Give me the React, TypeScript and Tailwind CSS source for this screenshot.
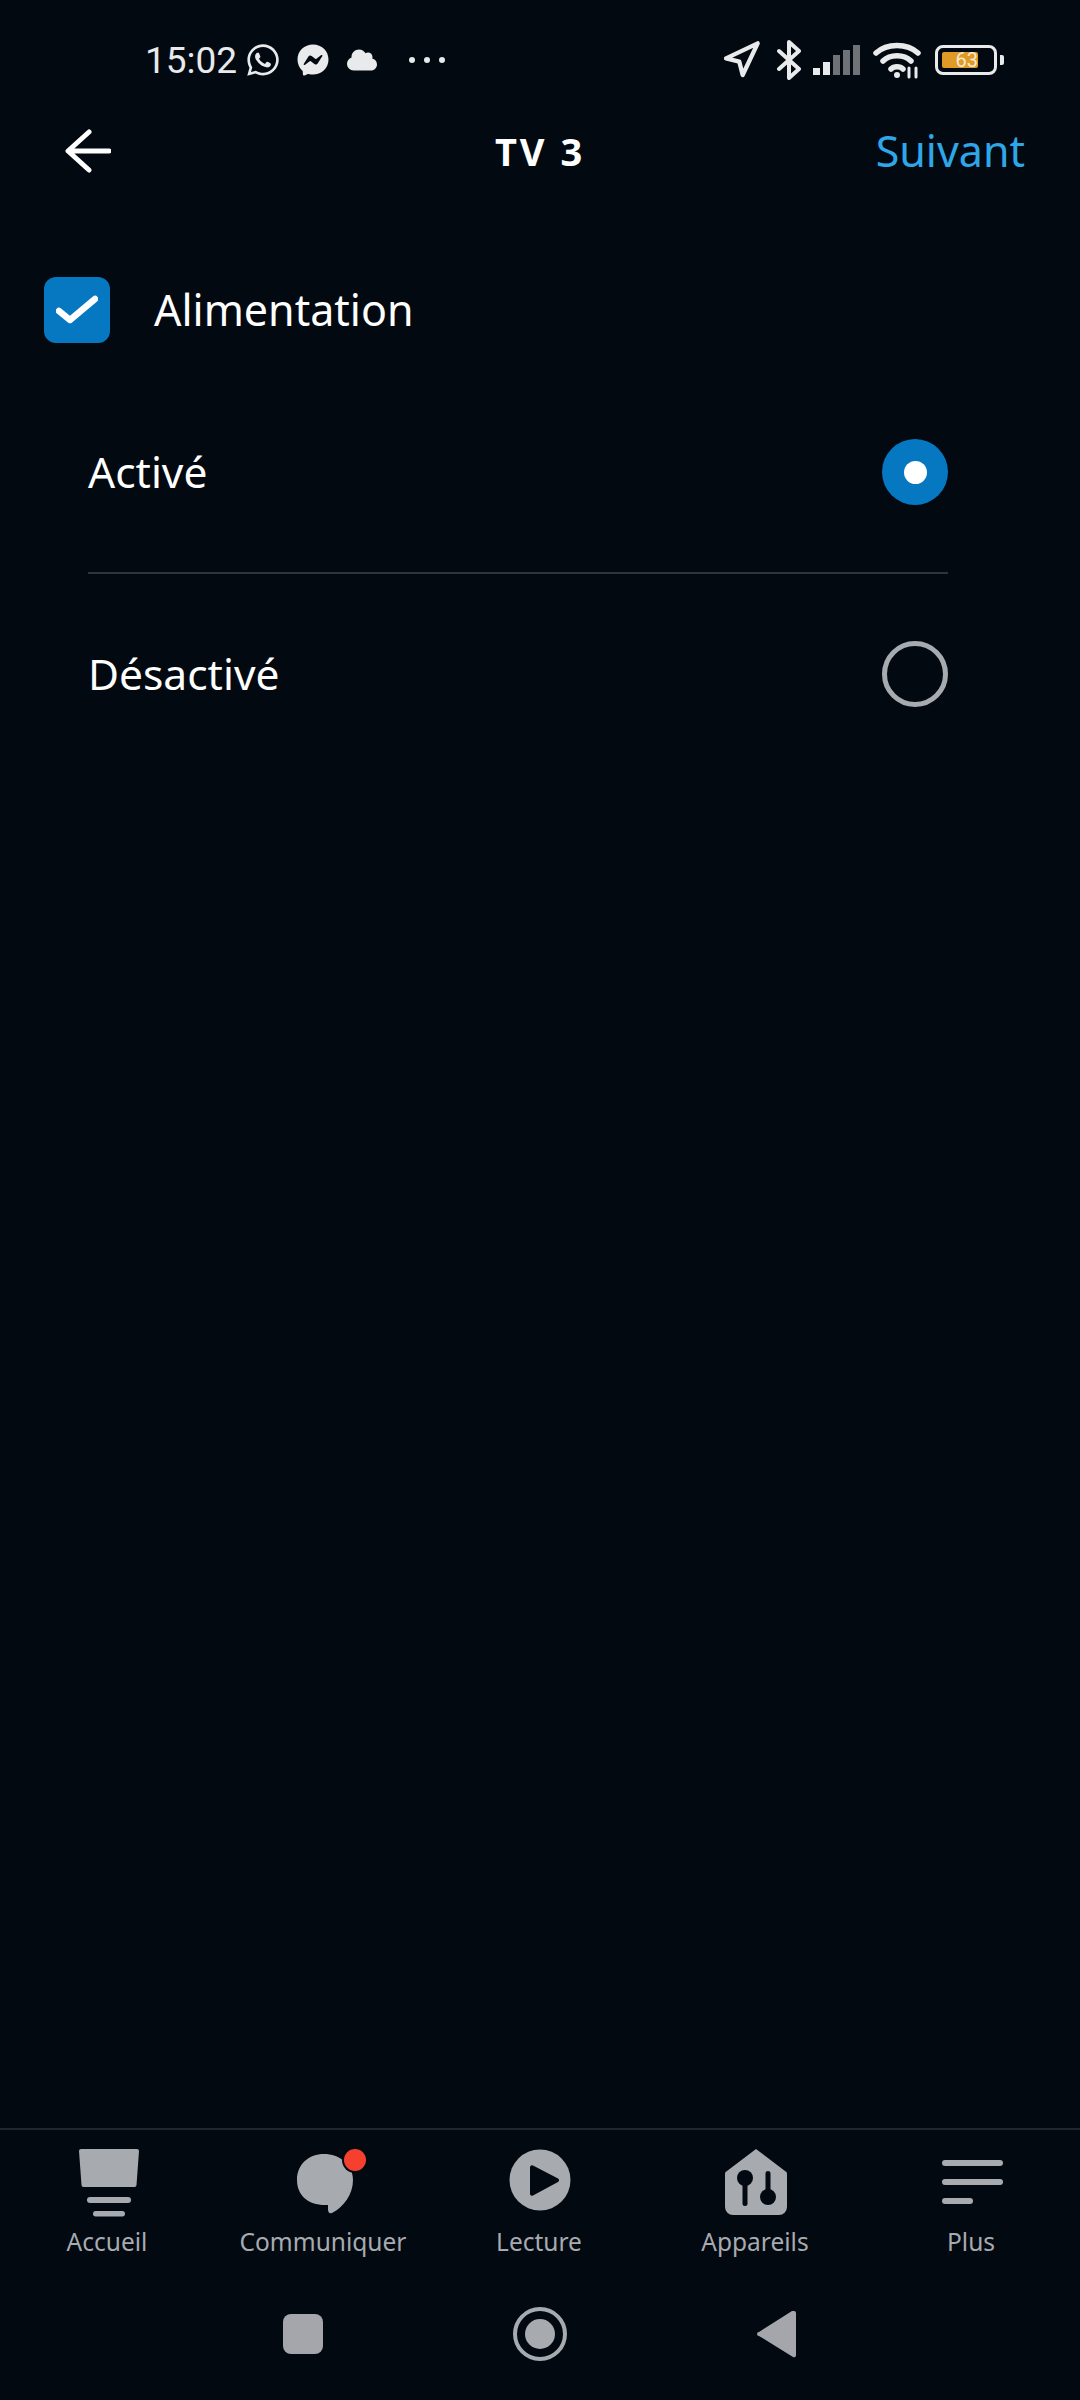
import React from "react";
import { Navigation } from "lucide-react";
import { FaWhatsapp, FaFacebookMessenger, FaCloud } from "react-icons/fa";

const bg = "#020911";
const grey = "#a7abb0";

const StatusBar = () => (
  <div className="h-[118px] pl-[145px] pr-[76px] flex items-center pt-[2px] text-[#e8eaec]">
    <span className="text-[37px] leading-none font-['Roboto',sans-serif]">15:02</span>
    <FaWhatsapp className="ml-[8px] w-[36px] h-[36px]" />
    <FaFacebookMessenger className="ml-[16px] w-[32px] h-[32px]" />
    <FaCloud className="ml-[18px] w-[30px] h-[30px]" />
    <div className="ml-[32px] flex gap-[9px]">
      <div className="w-[6px] h-[6px] rounded-full bg-[#e8eaec]"></div>
      <div className="w-[6px] h-[6px] rounded-full bg-[#e8eaec]"></div>
      <div className="w-[6px] h-[6px] rounded-full bg-[#e8eaec]"></div>
    </div>
    <div className="flex-1"></div>
    <Navigation className="w-[40px] h-[40px] mr-[15px]" strokeWidth={2.6} />
    <svg className="mr-[11px]" width="26" height="40" viewBox="0 0 26 40" fill="none" stroke="#e8eaec" strokeWidth="4" strokeLinecap="round" strokeLinejoin="round">
      <path d="M3 11l20 18-10 9V2l10 9L3 29" />
    </svg>
    <div className="flex items-end gap-[3px] h-[30px] mr-[13px]">
      <div className="w-[7px] h-[7px] bg-[#e8eaec]"></div>
      <div className="w-[7px] h-[13px] bg-[#e8eaec]"></div>
      <div className="w-[7px] h-[20px] bg-[#6f7377]"></div>
      <div className="w-[7px] h-[25px] bg-[#6f7377]"></div>
      <div className="w-[7px] h-[30px] bg-[#6f7377]"></div>
    </div>
    <svg className="mr-[14px]" width="48" height="38" viewBox="0 0 48 38" fill="none" stroke="#e8eaec" strokeWidth="5.500" strokeLinecap="round">
      <path d="M3 12C14 2 34 2 45 12" />
      <path d="M10 20C17 13 31 13 38 20" />
      <path d="M18 28C21 25 27 25 30 28" />
      <circle cx="24" cy="34" r="3" fill="#e8eaec" stroke="none" />
      <path d="M36 27v9M43 27v9" strokeWidth="3" />
    </svg>
    <div className="w-[62px] h-[30px] border-[3px] border-[#e8eaec] rounded-[8px] p-[4px] flex">
      <div className="w-[36px] h-full bg-[#e09a26] rounded-[2px] flex items-center justify-end text-[20px] leading-none text-[#f6ead4] font-['Roboto',sans-serif]">
        63
      </div>
    </div>
    <div className="ml-[3px] w-[4px] h-[10px] bg-[#e8eaec] rounded-r-[2px]"></div>
  </div>
);

const Header = () => (
  <div className="h-[66px] pl-[65px] pr-[55px] flex items-center justify-between relative">
    <svg width="46" height="44" viewBox="0 0 46 44" fill="none" stroke="white" strokeWidth="5" strokeLinecap="round" strokeLinejoin="round">
      <path d="M44 22H4M24 3L3 22l21 19" />
    </svg>
    <span className="absolute left-0 right-0 text-center text-[38px] font-bold tracking-[3px] text-white">TV 3</span>
    <span className="text-[43px] text-[#2ea6e8]">Suivant</span>
  </div>
);

const Option = ({ label, selected }: { label: string; selected?: boolean }) => (
  <div className="h-[200px] flex items-center justify-between">
    <span className="text-[42.500px] text-white">{label}</span>
    {selected ? (
      <div className="w-[66px] h-[66px] rounded-full bg-[#0677c1] flex items-center justify-center">
        <div className="w-[23px] h-[23px] rounded-full bg-white"></div>
      </div>
    ) : (
      <div className="w-[66px] h-[66px] rounded-full border-[5px] border-[#a7abb0]"></div>
    )}
  </div>
);

const HomeIcon = () => (
  <svg width="100" height="76" viewBox="0 0 100 76" fill={grey}>
    <path d="M23 5H79a2 2 0 0 1 2 2L78.500 41a2 2 0 0 1-2 2H25.500a2 2 0 0 1-2-2L21 7a2 2 0 0 1 2-2Z" />
    <rect x="29" y="53" width="44" height="6" rx="3" />
    <rect x="35" y="67" width="32" height="5.500" rx="2.700" />
  </svg>
);

const ChatIcon = () => (
  <svg width="100" height="76" viewBox="0 0 100 76" fill={grey}>
    <path d="M50 10C65 10 79 20 79 36C79 50 70 63 58 69C55 70 54 68 54 65V61C34 62 23 51 23 36C23 20 35 10 50 10Z" />
    <circle cx="81" cy="16" r="13" fill={bg} />
    <circle cx="81" cy="16" r="11" fill="#f5402f" />
  </svg>
);

const PlayIcon = () => (
  <svg width="100" height="76" viewBox="0 0 100 76" fill={grey}>
    <circle cx="50" cy="36" r="30.500" />
    <path d="M40 23V50a2 2 0 0 0 3 1.500L68 38a2 2 0 0 0 0-3.500L43 21.500a2 2 0 0 0-3 1.500Z" fill={bg} />
  </svg>
);

const DevicesIcon = () => (
  <svg width="100" height="76" viewBox="0 0 100 76" fill={grey}>
    <path d="M50 5L79 27a3 3 0 0 1 2 3V63a8 8 0 0 1-8 8H27a8 8 0 0 1-8-8V30a3 3 0 0 1 2-3Z" />
    <circle cx="39" cy="34" r="8" fill={bg} />
    <rect x="36.500" y="36" width="5" height="26" rx="2.500" fill={bg} />
    <rect x="59.500" y="27" width="5" height="26" rx="2.500" fill={bg} />
    <circle cx="62" cy="53" r="8" fill={bg} />
  </svg>
);

const MoreIcon = () => (
  <svg width="100" height="76" viewBox="0 0 100 76" fill={grey}>
    <rect x="20" y="16" width="61" height="6" rx="3" />
    <rect x="20" y="35" width="61" height="6" rx="3" />
    <rect x="20" y="54" width="31" height="6" rx="3" />
  </svg>
);

const Tab = ({ label, icon }: { label: string; icon: React.ReactNode }) => (
  <div className="w-[216px] flex flex-col items-center">
    {icon}
    <span className="text-[24.500px] leading-[30px] mt-[7px] pr-[2px] text-[#a7abb0]">{label}</span>
  </div>
);

export default function App() {
  return (
    <div className="w-[1080px] h-[2400px] flex flex-col bg-[#020911] font-['Noto_Sans',sans-serif]">
      <StatusBar />
      <Header />

      <div className="flex items-center pl-[44px] mt-[93px]">
        <div className="w-[66px] h-[66px] rounded-[12px] bg-[#0677c1] flex items-center justify-center">
          <svg width="42" height="34" viewBox="0 0 42 34" fill="none" stroke="white" strokeWidth="6.500" strokeLinecap="round" strokeLinejoin="round">
            <path d="M3 18l11 9L39 6" />
          </svg>
        </div>
        <span className="ml-[44px] text-[43px] text-white">Alimentation</span>
      </div>

      <div className="ml-[88px] mt-[29px] mr-[132px]">
        <div className="border-b-2 border-[#2f343a]">
          <Option label="Activé" selected />
        </div>
        <Option label="Désactivé" />
      </div>

      <div className="flex-1"></div>

      <div className="border-t-2 border-[#22272d] h-[272px] pt-[14px] flex flex-col">
        <div className="flex">
          <Tab label="Accueil" icon={<HomeIcon />} />
          <Tab label="Communiquer" icon={<ChatIcon />} />
          <Tab label="Lecture" icon={<PlayIcon />} />
          <Tab label="Appareils" icon={<DevicesIcon />} />
          <Tab label="Plus" icon={<MoreIcon />} />
        </div>
        <div className="flex items-center justify-center mt-[50px]">
          <div className="w-[40px] h-[40px] rounded-[8px] bg-[#a4a6ab]"></div>
          <div className="ml-[190px] w-[54px] h-[54px] rounded-full border-[4px] border-[#a7abb0] flex items-center justify-center">
            <div className="w-[30px] h-[30px] rounded-full bg-[#a7abb0]"></div>
          </div>
          <svg className="ml-[190px]" width="40" height="48" viewBox="0 0 40 48" fill="#a4a6ab">
            <path d="M37 1a2 2 0 0 1 2 2V45a2 2 0 0 1-3 2L2 26a2 2 0 0 1 0-4L35 1Z" />
          </svg>
        </div>
      </div>
    </div>
  );
}
